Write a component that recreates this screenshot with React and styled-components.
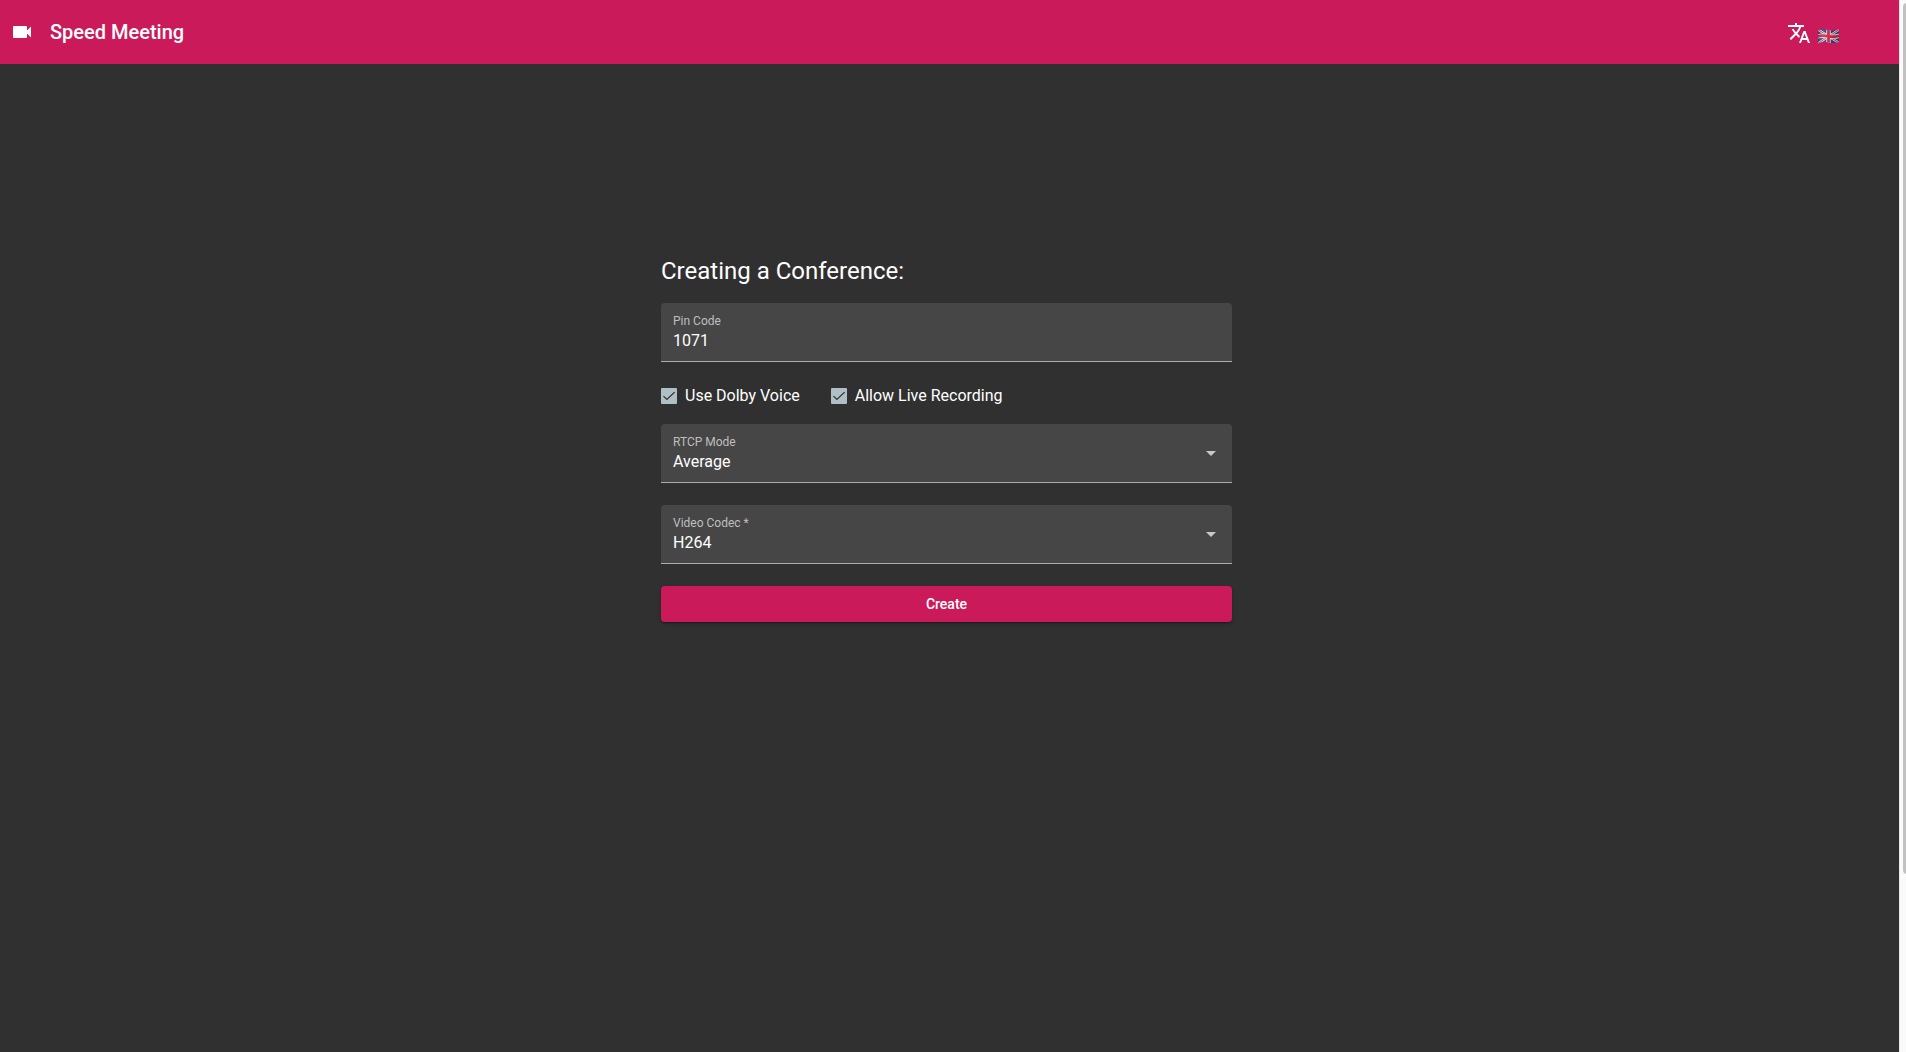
import React from "react";
import styled, { createGlobalStyle } from "styled-components";

const accent = "#cb1a5a";

const GlobalStyle = createGlobalStyle`
  *, *::before, *::after { box-sizing: border-box; }
  body {
    margin: 0;
    background: #303030;
    color: #fff;
    font-family: Roboto, "Liberation Sans", sans-serif;
  }
`;

const Shell = styled.div`
  display: flex;
  min-height: 100vh;
`;

const Page = styled.div`
  flex: 1;
  min-width: 0;
`;

const ScrollTrack = styled.div`
  width: 7px;
  height: 100vh;
  padding: 3px 0 0 3px;
  overflow: hidden;
  background: #fafafa;
  border-left: 1px solid #e8e8e8;
`;

const ScrollThumb = styled.div`
  width: 8px;
  height: 83%;
  border-radius: 4px;
  background: #c1c1c1;
`;

const Toolbar = styled.header`
  display: flex;
  align-items: center;
  gap: 16px;
  height: 64px;
  padding: 0 59px 0 10px;
  background: ${accent};
`;

const Brand = styled.h1`
  flex: 1;
  margin: 0;
  font-size: 20px;
  line-height: 32px;
  font-weight: 500;
`;

const LanguageButton = styled.button`
  display: flex;
  align-items: center;
  gap: 6px;
  padding: 2px 0 0;
  border: 0;
  background: none;
  color: inherit;
`;

const Icon = styled.svg`
  display: block;
  width: 24px;
  height: 24px;
  fill: currentColor;
`;

const Flag = styled.svg`
  display: block;
  width: 23px;
  height: 24px;
`;

const Main = styled.main`
  display: flex;
  justify-content: center;
  padding: 190px 6px 0 0;
`;

const Form = styled.form`
  width: 100%;
  max-width: 571px;
`;

const Heading = styled.h2`
  margin: 0 0 14px;
  font-size: 24px;
  line-height: 35px;
  font-weight: 400;
`;

const Field = styled.div`
  display: flex;
  align-items: center;
  height: 59px;
  margin-bottom: 22px;
  padding: 0 16px 0 12px;
  border-bottom: 1px solid #acacac;
  border-radius: 4px 4px 0 0;
  background: #464646;
`;

const FieldText = styled.div`
  display: flex;
  flex: 1;
  flex-direction: column;
`;

const Label = styled.label`
  color: #bfbfbf;
  font-size: 12px;
  line-height: 16px;
  padding-bottom: 2px;
`;

const valueStyles = `
  width: 100%;
  height: 20px;
  margin: 0;
  padding: 0;
  border: 0;
  outline: 0;
  appearance: none;
  background: transparent;
  color: #fff;
  font: 400 16px/20px Roboto, "Liberation Sans", sans-serif;
`;

const Input = styled.input`${valueStyles}`;
const Select = styled.select`${valueStyles}`;

const Arrow = styled.svg`
  width: 10px;
  height: 5px;
  fill: #c8c8c8;
  pointer-events: none;
`;

const Options = styled.div`
  display: flex;
  gap: 31px;
  margin-bottom: 16px;
`;

const Option = styled.label`
  display: flex;
  align-items: center;
  gap: 8px;
  font-size: 16px;
  line-height: 24px;
`;

const Tick = styled.span`
  display: grid;
  width: 16px;
  height: 16px;

  > * { grid-area: 1 / 1; }
`;

const Checkbox = styled.input`
  appearance: none;
  width: 16px;
  height: 16px;
  margin: 0;
  border: 2px solid #b0bec5;
  border-radius: 1px;

  &:checked { background: #b0bec5; }
  &:not(:checked) + svg { visibility: hidden; }
`;

const TickMark = styled.svg`
  position: relative;
  width: 16px;
  height: 16px;
  fill: none;
  stroke: #303030;
  pointer-events: none;
`;

const Submit = styled.button`
  display: block;
  width: 100%;
  height: 36px;
  padding: 0 16px;
  border: 0;
  border-radius: 4px;
  background: ${accent};
  color: #fff;
  font: 500 14px/36px Roboto, "Liberation Sans", sans-serif;
  box-shadow: 0 3px 1px -2px rgba(0, 0, 0, 0.2), 0 2px 2px rgba(0, 0, 0, 0.14),
    0 1px 5px rgba(0, 0, 0, 0.12);
`;

function CheckOption({ id, children }) {
  return (
    <Option htmlFor={id}>
      <Tick>
        <Checkbox id={id} type="checkbox" defaultChecked />
        <TickMark viewBox="0 0 24 24" aria-hidden="true">
          <path d="M3.700 12.200 8.800 17.200 20.500 6.200" strokeWidth="1.900" />
        </TickMark>
      </Tick>
      {children}
    </Option>
  );
}

function SelectField({ id, label, options }) {
  return (
    <Field>
      <FieldText>
        <Label htmlFor={id}>{label}</Label>
        <Select id={id}>
          {options.map((option) => (
            <option key={option}>{option}</option>
          ))}
        </Select>
      </FieldText>
      <Arrow viewBox="0 0 10 5" aria-hidden="true">
        <path d="M0 0h10L5 5z" />
      </Arrow>
    </Field>
  );
}

function BritishFlag() {
  return (
    <Flag viewBox="0 -3 23 24" aria-hidden="true">
      <defs>
        <clipPath id="flag-shape">
          <path d="M1 6.4C4 4.6 7.500 5.400 11 6.100S18.500 6.800 22 5.200V17.800C18.500 19.500 15 19.200 11.500 18.500S4.500 17.900 1 19.600Z" />
        </clipPath>
        <linearGradient id="flag-shade">
          <stop offset="0" stopColor="#000" stopOpacity="0.25" />
          <stop offset="0.3" stopColor="#fff" stopOpacity="0.1" />
          <stop offset="0.7" stopColor="#000" stopOpacity="0.12" />
          <stop offset="1" stopColor="#000" stopOpacity="0.2" />
        </linearGradient>
      </defs>
      <g clipPath="url(#flag-shape)">
        <path fill="#1f4a94" d="M0 3h23v18H0z" />
        <path stroke="#e9e4ea" strokeWidth="2.400" d="M0 5 23 19.500M0 20 23 5" />
        <path stroke="#cf2b42" strokeWidth="0.900" d="M0 5 23 19.500M0 20 23 5" />
        <path fill="none" stroke="#f1e9ee" strokeWidth="4.400" d="M11.500 3v18M0 12.500C4 11 7 11.500 11.500 12.300S19 13 23 11.600" />
        <path fill="none" stroke="#d8253f" strokeWidth="2.800" d="M11.500 3v18M0 12.500C4 11 7 11.500 11.500 12.300S19 13 23 11.600" />
        <path fill="url(#flag-shade)" d="M0 3h23v18H0z" />
      </g>
    </Flag>
  );
}

export default function App() {
  return (
    <>
      <GlobalStyle />
      <Shell>
        <Page>
          <Toolbar>
            <Icon viewBox="0 0 24 24" aria-hidden="true">
              <path d="M17 10.500V7c0-.55-.45-1-1-1H4c-.55 0-1 .45-1 1v10c0 .55.45 1 1 1h12c.55 0 1-.45 1-1v-3.500l4 4v-11l-4 4z" />
            </Icon>
            <Brand>Speed Meeting</Brand>
            <LanguageButton type="button" aria-label="Language">
              <Icon viewBox="0 0 24 24" aria-hidden="true">
                <path d="M12.870 15.070l-2.540-2.510.03-.03c1.740-1.940 2.980-4.170 3.710-6.530H17V4h-7V2H8v2H1v1.990h11.170C11.500 7.920 10.440 9.750 9 11.350 8.070 10.320 7.300 9.190 6.690 8h-2c.73 1.630 1.730 3.170 2.980 4.560l-5.090 5.020L4 19l5-5 3.110 3.110.76-2.040zM18.500 10h-2L12 22h2l1.120-3h4.750L21 22h2l-4.500-12zm-2.620 7l1.620-4.330L19.120 17h-3.240z" />
              </Icon>
              <BritishFlag />
            </LanguageButton>
          </Toolbar>
          <Main>
            <Form onSubmit={(event) => event.preventDefault()}>
              <Heading>Creating a Conference:</Heading>
              <Field>
                <FieldText>
                  <Label htmlFor="pin">Pin Code</Label>
                  <Input id="pin" type="text" defaultValue="1071" />
                </FieldText>
              </Field>
              <Options>
                <CheckOption id="dolby">Use Dolby Voice</CheckOption>
                <CheckOption id="recording">Allow Live Recording</CheckOption>
              </Options>
              <SelectField id="rtcp" label="RTCP Mode" options={["Average", "Worst", "Max"]} />
              <SelectField id="codec" label="Video Codec *" options={["H264", "VP8"]} />
              <Submit type="submit">Create</Submit>
            </Form>
          </Main>
        </Page>
        <ScrollTrack aria-hidden="true">
          <ScrollThumb />
        </ScrollTrack>
      </Shell>
    </>
  );
}
